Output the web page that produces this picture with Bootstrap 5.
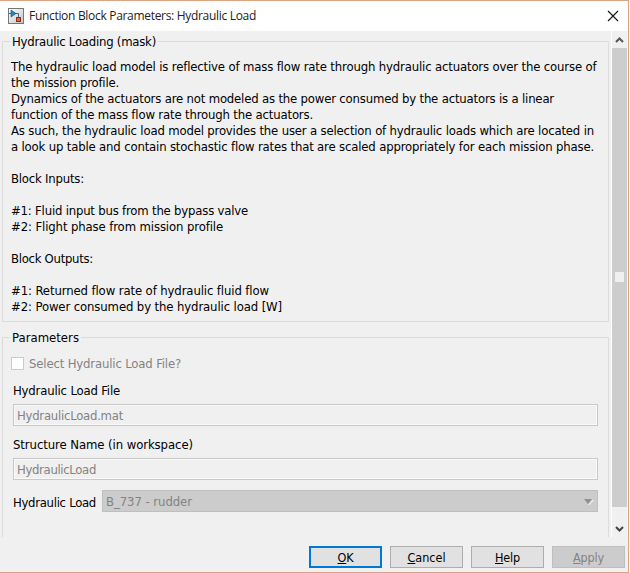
<!DOCTYPE html>
<html lang="en">
<head>
<meta charset="utf-8">
<title>Function Block Parameters: Hydraulic Load</title>
<link href="https://cdn.jsdelivr.net/npm/bootstrap@5.3.0/dist/css/bootstrap.min.css" rel="stylesheet">
<style>
body{width:630px;height:573px;overflow:hidden;background:#fff;color:#000;font:13px/16px "DejaVu Sans Condensed","DejaVu Sans",sans-serif;font-stretch:condensed}
.dialog{width:629px;height:573px;background:#f0f0f0;border:solid #dba583;border-width:1px 1px 1px 0}
.titlebar{height:30px;background:#fff;padding:0 9px 0 8px;color:#222;font:12px/16px "Open Sans","Noto Sans",sans-serif}
.titlebar span{margin-left:5px}
.pane{height:506px;overflow:hidden}
.content{width:611px;padding:10px 2px 0}
.group{position:relative;border:1px solid #dcdcdc;width:607px}
.caption{position:absolute;top:-8px;left:7px;padding:0 2px;background:#f0f0f0;white-space:nowrap}
.about{height:281px;padding:17px 0 0 8px}
.about div{height:16px;white-space:nowrap}
.params{height:230px;margin-top:15px;padding:18px 10px 0}
.dim{color:#838383}
.check{width:13px;height:13px;border:1px solid #ccc;background:#fff;margin:0 5px 1px -2px}
.lbl-file{height:21px;margin-top:11px}
.lbl-struct{height:24px;margin-top:8px;padding-top:3px}
.row-load{margin-top:10px}
.field{height:22px;width:585px;border:1px solid #c8c8c8;box-shadow:inset 0 0 0 1px #fafafa;padding:3px;color:#838383;background:#f0f0f0}
.combo{height:22px;width:496px;border:1px solid #bfbfbf;background:#ccc;color:#838383;padding:1px 3px 0}
.scroll{width:17px;border-left:1px solid #fff;border-right:1px solid #f8f8f8}
.thumb{height:459px;background:#cdcdcd;padding-bottom:2px}
.grip{width:9px;height:10px;background:#f0f0f0}
.actions{padding:9px 3px 0 0}
.act{width:73px;height:22px;line-height:22px;padding:0;border:1px solid #adadad;border-radius:0;background:#e1e1e1;color:#000;font-size:12.500px}
.act.main{border:2px solid #0078d7;line-height:20px}
.act:disabled{background:#ccc;border-color:#bfbfbf;color:#838383;opacity:1}
.fit{display:inline-block;white-space:nowrap}
</style>
</head>
<body>
<div class="dialog d-flex flex-column">
  <header class="titlebar d-flex align-items-center">
    <svg width="16" height="16" viewBox="0 0 16 16"><defs><linearGradient id="g" x2="1" y2="1"><stop stop-color="#fff"/><stop offset="1" stop-color="#c4c4c4"/></linearGradient></defs><rect x=".5" y=".5" width="15" height="15" fill="url(#g)" stroke="#777"/><path d="M1 5.500h2M7 5.500h3.500v4" fill="none" stroke="#3c6a86"/><path d="M3 2v7l5-3.500z" fill="#2387bd" stroke="#175b88" stroke-width=".7"/><rect x="8.500" y="9.500" width="4" height="4" fill="#e4683f" stroke="#8e2c13"/></svg>
    <span class="fit" data-w="227">Function Block Parameters: Hydraulic Load</span>
    <svg class="ms-auto" width="12" height="12" viewBox="0 0 12 12"><path d="M1 1l10 10M11 1L1 11" stroke="#111" stroke-width="1.100"/></svg>
  </header>
  <div class="pane d-flex">
    <main class="content">
      <section class="group about">
        <div class="caption"><span class="fit" data-w="144">Hydraulic Loading (mask)</span></div>
        <div><span class="fit" data-w="585.500">The hydraulic load model is reflective of mass flow rate through hydraulic actuators over the course of</span></div>
        <div><span class="fit" data-w="108">the mission profile.</span></div>
        <div><span class="fit" data-w="543">Dynamics of the actuators are not modeled as the power consumed by the actuators is a linear</span></div>
        <div><span class="fit" data-w="302">function of the mass flow rate through the actuators.</span></div>
        <div><span class="fit" data-w="583">As such, the hydraulic load model provides the user a selection of hydraulic loads which are located in</span></div>
        <div><span class="fit" data-w="583">a look up table and contain stochastic flow rates that are scaled appropriately for each mission phase.</span></div>
        <div></div>
        <div><span class="fit" data-w="73">Block Inputs:</span></div>
        <div></div>
        <div><span class="fit" data-w="237">#1: Fluid input bus from the bypass valve</span></div>
        <div><span class="fit" data-w="212">#2: Flight phase from mission profile</span></div>
        <div></div>
        <div><span class="fit" data-w="82">Block Outputs:</span></div>
        <div></div>
        <div><span class="fit" data-w="258">#1: Returned flow rate of hydraulic fluid flow</span></div>
        <div><span class="fit" data-w="271">#2: Power consumed by the hydraulic load [W]</span></div>
      </section>
      <section class="group params">
        <div class="caption"><span class="fit" data-w="67">Parameters</span></div>
        <label class="d-flex align-items-center dim"><i class="check"></i><span class="fit" data-w="152">Select Hydraulic Load File?</span></label>
        <div class="lbl-file"><span class="fit" data-w="107">Hydraulic Load File</span></div>
        <div class="field"><span class="fit" data-w="106">HydraulicLoad.mat</span></div>
        <div class="lbl-struct"><span class="fit" data-w="180">Structure Name (in workspace)</span></div>
        <div class="field"><span class="fit" data-w="79">HydraulicLoad</span></div>
        <div class="row-load d-flex align-items-center"><span class="fit pt-1" data-w="83">Hydraulic Load</span>
          <div class="combo ms-auto d-flex align-items-center justify-content-between"><span class="fit" data-w="86">B_737 - rudder</span><svg width="10" height="6" viewBox="0 0 10 6"><path d="M4.500 6L9.500 1" stroke="#fff"/><path d="M0 0h8L4 5z" fill="#909090"/></svg></div>
        </div>
      </section>
    </main>
    <aside class="scroll d-flex flex-column">
      <svg width="15" height="17" viewBox="0 0 15 17"><path d="M4 11l3.500-3.500L11 11" fill="none" stroke="#555" stroke-width="2"/></svg>
      <div class="thumb d-flex align-items-center justify-content-center"><div class="grip"></div></div>
      <svg width="15" height="30" viewBox="0 0 15 30"><path d="M4 20l3.500 3.500L11 20" fill="none" stroke="#444" stroke-width="2"/></svg>
    </aside>
  </div>
  <footer class="actions d-flex justify-content-end gap-2">
    <button class="btn act main"><span class="fit" data-w="16"><u>O</u>K</span></button>
    <button class="btn act"><span class="fit" data-w="38"><u>C</u>ancel</span></button>
    <button class="btn act"><span class="fit" data-w="25"><u>H</u>elp</span></button>
    <button class="btn act" disabled><span class="fit" data-w="31"><u>A</u>pply</span></button>
  </footer>
</div>
<script src="https://cdn.jsdelivr.net/npm/bootstrap@5.3.0/dist/js/bootstrap.bundle.min.js"></script>
<script>
// Track each label to its data-w width in pixels.
document.querySelectorAll('.fit').forEach(function (el) {
  var gap = el.dataset.w - el.getBoundingClientRect().width;
  el.style.letterSpacing = (gap / el.textContent.length) + 'px';
});
</script>
</body>
</html>
